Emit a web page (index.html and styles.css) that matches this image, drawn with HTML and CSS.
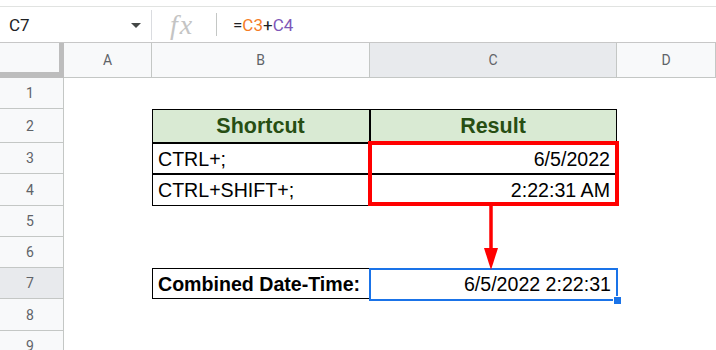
FILE: index.html
```html
<!DOCTYPE html>
<html lang="en">
<head>
    <meta charset="UTF-8">
    <title>Combined Date-Time</title>
    <link rel="stylesheet" href="styles.css">
</head>
<body>
    <div class="topline"></div>

    <div class="formula-bar">
        <div class="name-box">
            <span class="cell-ref">C7</span>
            <span class="caret"></span>
        </div>
        <span class="sep"></span>
        <div class="fx-zone"><span class="fx">fx</span></div>
        <span class="sep short"></span>
        <div class="formula">=<span class="ref-a">C3</span>+<span class="ref-b">C4</span></div>
    </div>

    <div class="sheet">
        <div class="corner"></div>
        <div class="col-head">A</div>
        <div class="col-head">B</div>
        <div class="col-head active">C</div>
        <div class="col-head">D</div>

        <div class="row-head">1</div>
        <div class="cell"></div><div class="cell"></div><div class="cell"></div><div class="cell"></div>

        <div class="row-head">2</div>
        <div class="cell"></div>
        <div class="cell tbl head">Shortcut</div>
        <div class="cell tbl head">Result</div>
        <div class="cell"></div>

        <div class="row-head">3</div>
        <div class="cell"></div>
        <div class="cell tbl">CTRL+;</div>
        <div class="cell tbl num">6/5/2022</div>
        <div class="cell"></div>

        <div class="row-head">4</div>
        <div class="cell"></div>
        <div class="cell tbl">CTRL+SHIFT+;</div>
        <div class="cell tbl num">2:22:31 AM</div>
        <div class="cell"></div>

        <div class="row-head">5</div>
        <div class="cell"></div><div class="cell"></div><div class="cell"></div><div class="cell"></div>

        <div class="row-head">6</div>
        <div class="cell"></div><div class="cell"></div><div class="cell"></div><div class="cell"></div>

        <div class="row-head active">7</div>
        <div class="cell"></div>
        <div class="cell tbl label">Combined Date-Time:</div>
        <div class="cell num">6/5/2022 2:22:31</div>
        <div class="cell"></div>

        <div class="row-head">8</div>
        <div class="cell"></div><div class="cell"></div><div class="cell"></div><div class="cell"></div>

        <div class="row-head">9</div>
        <div class="cell"></div><div class="cell"></div><div class="cell"></div><div class="cell"></div>

        <!-- overlays -->
        <div class="red-box"></div>
        <div class="selection"><span class="handle"></span></div>
        <svg class="arrow" width="247" height="62" viewBox="0 0 247 62">
            <line x1="121" y1="-1" x2="121" y2="44" stroke="#ff0000" stroke-width="3.5"/>
            <polygon points="114,42 128,42 121,64" fill="#ff0000"/>
        </svg>
    </div>
</body>
</html>
```

FILE: styles.css
```css
:root {
    --head-bg: #f8f9fa;
    --head-active: #e8eaed;
    --head-line: #c4c7c5;
    --head-text: #5f6368;
    --select-blue: #1a73e8;
    --mark-red: #ff0000;
}

* {
    box-sizing: border-box;
}

body {
    margin: 0;
    width: 716px;
    height: 350px;
    overflow: hidden;
    background: #fff;
    font-family: Roboto, "Liberation Sans", Arial, sans-serif;
}

.topline {
    height: 7px;
    border-bottom: 1px solid #e1e3e1;
}

/* formula bar */
.formula-bar {
    display: flex;
    align-items: center;
    height: 36px;
    border-bottom: 1px solid #c7c7c7;
}

.name-box {
    width: 151px;
    display: flex;
    align-items: center;
    padding-left: 9px;
}

.cell-ref {
    font-size: 17px;
    color: #202124;
}

.caret {
    margin-left: auto;
    margin-right: 10px;
    margin-top: 2px;
    border-left: 5px solid transparent;
    border-right: 5px solid transparent;
    border-top: 5px solid #444746;
}

.sep {
    width: 1px;
    height: 30px;
    background: #dadce0;
}

.sep.short {
    height: 23px;
    background: #c4c7c5;
}

.fx-zone {
    width: 64px;
    display: flex;
    justify-content: center;
    padding-right: 4px;
}

.fx {
    font-family: "Liberation Serif", serif;
    font-style: italic;
    font-size: 28px;
    letter-spacing: 2px;
    line-height: 1;
    color: #c4c4c4;
}

.formula {
    padding-left: 16px;
    font-size: 17px;
    color: #202124;
}

.ref-a {
    color: #f57c26;
}

.ref-b {
    color: #7e57b8;
}

/* grid */
.sheet {
    position: relative;
    display: grid;
    grid-template-columns: 64px 88px 218px 247px 1fr;
    grid-template-rows: 35px 31px 34px 31px 32px 31px 31px 31px 32px 31px;
}

.corner {
    background: var(--head-bg);
    border-right: 5px solid #bdbdbd;
    border-bottom: 6px solid #bdbdbd;
}

.col-head,
.row-head {
    display: flex;
    align-items: center;
    justify-content: center;
    background: var(--head-bg);
    color: var(--head-text);
    font-size: 14px;
    border-right: 1px solid var(--head-line);
    border-bottom: 1px solid var(--head-line);
}

.row-head {
    padding-right: 3px;
}

.col-head.active,
.row-head.active {
    background: var(--head-active);
}

.cell {
    display: flex;
    align-items: center;
    padding: 1px 6px 0 5px;
    font-family: "Liberation Sans", Arial, sans-serif;
    font-size: 19.6px;
    line-height: 1.15;
    color: #000;
    white-space: nowrap;
}

.cell.tbl {
    border: 1px solid #000;
}

.cell.head {
    justify-content: center;
    background: #d9ead3;
    color: #274e13;
    font-weight: bold;
    font-size: 21.5px;
}

.cell.num {
    justify-content: flex-end;
}

.cell.label {
    font-weight: bold;
}

/* overlays */
.red-box {
    position: absolute;
    grid-column: 4 / 5;
    grid-row: 4 / 6;
    inset: -2px -2px 0 -2px;
    border: 4px solid var(--mark-red);
}

.selection {
    position: absolute;
    grid-column: 4 / 5;
    grid-row: 8 / 9;
    inset: 0 -1px -2px -1px;
    border: 2px solid var(--select-blue);
}

.handle {
    position: absolute;
    right: -6px;
    bottom: -6px;
    width: 9px;
    height: 9px;
    background: var(--select-blue);
    border: 1px solid #fff;
}

.arrow {
    position: absolute;
    grid-column: 4 / 5;
    grid-row: 6 / 8;
    top: 0;
    left: 0;
    overflow: visible;
}
```
